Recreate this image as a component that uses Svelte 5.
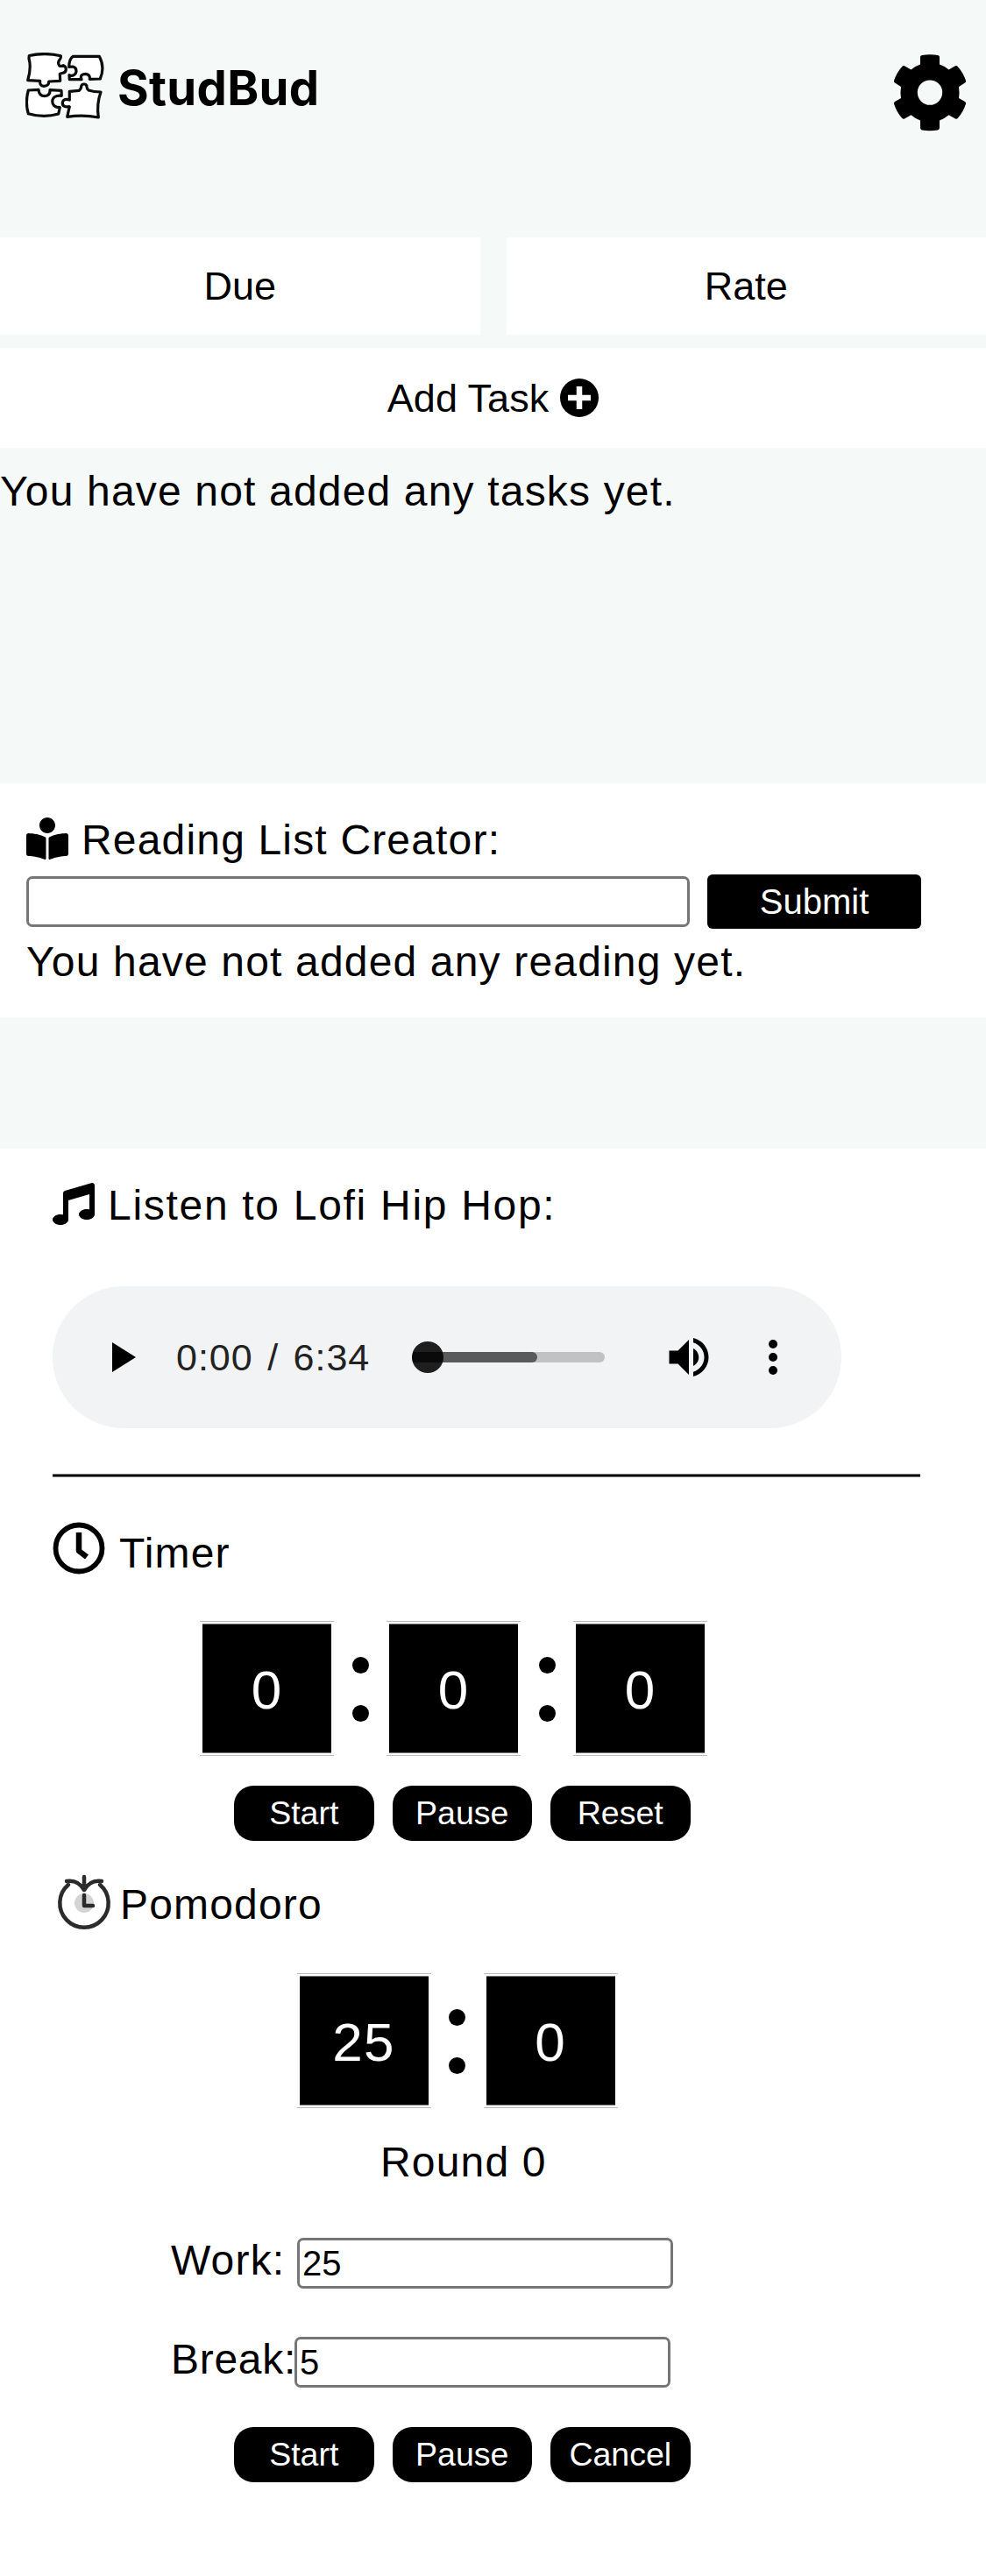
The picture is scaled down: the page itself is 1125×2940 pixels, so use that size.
<script>
  const timer = ['0', '0', '0'];
  const pomodoro = ['25', '0'];
  const timerActions = ['Start', 'Pause', 'Reset'];
  const pomodoroActions = ['Start', 'Pause', 'Cancel'];
  let reading = $state('');
  let work = $state('25');
  let rest = $state('5');
</script>

{#snippet clock(values)}
  <div class="clock">
    {#each values as value, i}
      {#if i > 0}
        <div class="colon"><i></i><i></i></div>
      {/if}
      <div class="cell"><span>{value}</span></div>
    {/each}
  </div>
{/snippet}

{#snippet actions(labels)}
  <div class="actions">
    {#each labels as label}
      <button class="pill">{label}</button>
    {/each}
  </div>
{/snippet}

<div class="page">
  <header>
    <div class="brand">
      <svg class="logo" width="92" height="78" viewBox="0 0 92 78" fill="#fff" stroke="#0c0c0c" stroke-width="3.2" stroke-linejoin="round">
        <path d="M4.300 3.500Q22.700 -.500 40.300 3.700Q41 6 38.500 9Q36.500 12 39 15.200Q40.300 16 43.300 14.700Q46.500 16 46.300 19.300Q46 23 42 23.500L39.300 24.300L39.700 32.300L26.700 33Q27 38 21 38.300Q16 38 16.700 32.300L2.700 31.700Q7 17 4 7Z"/>
        <path d="M54.300 4.300H84.300Q91 16.700 85.300 30L73.300 30.300Q74 25 68.700 24.300Q63.500 24.500 63.300 28L64 30.700H50.300L50 25.700Q53 27 55.300 25.700Q58 24 58 21Q58 17 54.300 16L49.700 16.300Q50 7 54.300 4.300Z"/>
        <path d="M3.300 43L15 42.300Q15.500 49.500 22 49.700Q28.500 49 28 42.700L41 43.300L41.300 49.300Q31 48.500 30.700 55.700Q31 62.500 39.300 62.700L37.700 70Q21 75 3.300 69.700Q-.500 57 3.300 43Z"/>
        <path d="M50.300 44.300L61.300 43.300Q64 41 63.700 38.300Q64.500 36 66.700 36Q70 36 70 39Q70 41.500 72 43Q78 45 86 45Q81 59 83.300 74Q66 70.500 47.700 73.300L50.300 61.700Q42 63 42.300 57Q43 52 50.300 54Z"/>
      </svg>
      <h1>StudBud</h1>
    </div>
    <svg class="gear" width="84" height="90" viewBox="0 0 84 90" fill="#000">
      <path fill-rule="evenodd" d="M31 4Q31 2.300 33 2Q42 .600 51 2Q53 2.300 53 4V12.500Q59 14.500 63.500 18.500L71 14.300Q72.500 13.500 73.700 15Q80 22 83 31Q83.500 32.800 82 33.600L75 38Q76 44.500 75 51L82 55Q83.500 56 83 57.500Q80 67 73.700 74Q72.500 75.300 71 74.500L63.500 70.300Q59 74.200 53 76.500V85Q53 87 51 87.400Q42 89 33 87.400Q31 87 31 85V76.500Q25 74.200 20.500 70.300L13 74.500Q11.500 75.300 10.300 74Q4 67 1 57.500Q.500 56 2 55L9 51Q8 44.500 9 38L2 33.600Q.500 32.800 1 31Q4 22 10.300 15Q11.500 13.500 13 14.300L20.500 18.500Q25 14.500 31 12.500ZM42 30.400A14.200 14.200 0 1 0 42 58.800A14.200 14.200 0 1 0 42 30.400Z"/>
    </svg>
  </header>

  <section class="tasks">
    <div class="sorts">
      <button class="wide">Due</button>
      <button class="wide">Rate</button>
    </div>
    <button class="wide add">Add Task
      <svg width="44" height="44" viewBox="0 0 44 44"><circle cx="22" cy="22" r="22"/><path d="M22 9V35M9 22H35" stroke="#fff" stroke-width="6.500"/></svg>
    </button>
    <p class="none">You have not added any tasks yet.</p>
  </section>

  <section class="reading">
    <h2>
      <svg width="48" height="48" viewBox="0 0 512 512"><path d="M352 96c0-53.020-42.980-96-96-96s-96 42.980-96 96 42.980 96 96 96 96-42.980 96-96zM233.590 241.100c-59.330-36.320-155.430-46.300-203.790-49.050C13.550 191.130 0 203.510 0 219.140v222.800c0 14.330 11.590 26.280 26.490 27.050 43.660 2.290 131.990 10.680 193.040 41.430 9.370 4.720 20.480-1.710 20.480-11.870V252.560c-.01-4.670-2.320-8.950-6.420-11.460zm248.610-49.050c-48.350 2.740-144.460 12.730-203.780 49.050-4.100 2.510-6.410 6.960-6.410 11.630v245.790c0 10.190 11.140 16.630 20.540 11.900 61.040-30.720 149.320-39.110 192.970-41.400 14.900-.780 26.490-12.730 26.490-27.060V219.140c-.01-15.630-13.560-28.010-29.810-27.090z"/></svg>
      <span>Reading List Creator:</span>
    </h2>
    <div class="entry">
      <input bind:value={reading} />
      <button>Submit</button>
    </div>
    <p>You have not added any reading yet.</p>
  </section>

  <main>
    <h2 class="listen">
      <svg width="48" height="48" viewBox="0 0 512 512"><path d="M470.380 1.510L150.410 96A32 32 0 0 0 128 126.510v261.410A139 139 0 0 0 96 384c-53 0-96 28.660-96 64s43 64 96 64 96-28.660 96-64V214.320l256-75v184.610a138.400 138.400 0 0 0-32-3.930c-53 0-96 28.660-96 64s43 64 96 64 96-28.650 96-64V32a32 32 0 0 0-41.620-30.490z"/></svg>
      <span>Listen to Lofi Hip Hop:</span>
    </h2>

    <div class="player">
      <svg class="play" width="27" height="34" viewBox="0 0 27 34"><path d="M0 0L27 17L0 34Z"/></svg>
      <span class="time">0:00 / 6:34</span>
      <div class="track"><div class="loaded"></div><div class="knob"></div></div>
      <svg class="volume" width="60" height="60" viewBox="0 0 24 24"><path d="M3 9v6h4l5 5V4L7 9H3zm13.500 3c0-1.770-1.020-3.290-2.500-4.030v8.050c1.480-.730 2.500-2.250 2.500-4.020zM14 3.230v2.060c2.890.860 5 3.540 5 6.710s-2.110 5.850-5 6.710v2.060c4.010-.910 7-4.490 7-8.770s-2.990-7.860-7-8.770z"/></svg>
      <svg class="more" width="10" height="40" viewBox="0 0 10 40"><circle cx="5" cy="5" r="5"/><circle cx="5" cy="20" r="5"/><circle cx="5" cy="35" r="5"/></svg>
    </div>

    <hr />

    <h2 class="timer">
      <svg width="60" height="60" viewBox="0 0 60 60" fill="none" stroke="#000"><circle cx="30" cy="30" r="26.500" stroke-width="5.800"/><path d="M30 12V33L39 40" stroke-width="6.500" stroke-linejoin="round"/></svg>
      <span>Timer</span>
    </h2>
    {@render clock(timer)}
    {@render actions(timerActions)}

    <h2 class="pomodoro">
      <svg width="62" height="64" viewBox="0 0 62 64" fill="none" stroke="#2b2b2b" stroke-width="4.500" stroke-linecap="round" stroke-linejoin="round"><circle cx="31" cy="33" r="11" fill="#d4d4d4" stroke="none"/><path d="M13 12A27.700 27.700 0 1 0 49 12M31 3V18M11 8Q24 6 31 18Q38 6 51 8M31 24V36H41"/></svg>
      <span>Pomodoro</span>
    </h2>
    <div class="shift">{@render clock(pomodoro)}</div>
    <p class="round">Round 0</p>
    <label class="field"><span>Work:</span><input bind:value={work} /></label>
    <label class="field rest"><span>Break:</span><input bind:value={rest} /></label>
    {@render actions(pomodoroActions)}
  </main>
</div>

<style>
  :global(body) { background: #f5f9f8; }
  .page {
    width: 1125px;
    height: 2940px;
    display: flex;
    flex-direction: column;
    overflow: hidden;
    background: #f5f9f8;
    color: #000;
    font: 48px/60px "Liberation Sans", Arial, sans-serif;
    letter-spacing: 1.17px;
  }
  * { box-sizing: border-box; }
  h1, h2, p { margin: 0; font-weight: 400; font-size: inherit; }
  svg { display: block; flex: none; }
  button {
    border: 0;
    padding: 0;
    margin: 0;
    font-family: inherit;
    letter-spacing: 0;
    color: inherit;
  }
  header {
    height: 271px;
    display: flex;
    justify-content: space-between;
    align-items: flex-start;
    padding: 60px 22px 0 29px;
  }
  .brand { display: flex; gap: 13px; }
  h1 {
    font: 700 54.500px/81px Inter, sans-serif;
    letter-spacing: 0.300px;
  }
  .gear { margin-top: 1px; }
  .tasks { height: 623px; }
  .sorts { display: grid; grid-template-columns: 1fr 1fr; gap: 30px; margin-bottom: 15px; }
  .wide { background: #fff; font-size: 45px; line-height: 51px; height: 111px; }
  .add {
    width: 100%;
    height: 114px;
    display: flex;
    align-items: center;
    justify-content: center;
    gap: 13px;
  }
  .none { margin-top: 20px; }
  .reading { background: #fff; height: 267px; padding: 35px 74px 0 30px; }
  h2 { display: flex; align-items: flex-start; }
  .reading h2 { height: 68px; }
  .reading h2 svg { margin: 4px 15px 0 0; }
  .entry { display: flex; align-items: center; gap: 20px; margin-top: 1px; }
  input {
    height: 58px;
    border: 3px solid #767676;
    border-radius: 7px;
    background: #fff;
    padding: 0 3px;
    font: 40px/46px "Liberation Sans", Arial, sans-serif;
    color: #000;
    outline: none;
  }
  .entry input { width: 757px; }
  .entry button { width: 244px; height: 62px; background: #000; color: #fff; border-radius: 6px; font-size: 40px; }
  .reading p { margin-top: 8px; }
  main { margin-top: 150px; flex: 1; background: #fff; padding: 39px 75px 0 60px; }
  .listen { height: 118px; letter-spacing: 1.7px; }
  .listen span { margin: -4px 0 0 15px; }
  .player {
    width: 900px;
    height: 162px;
    border-radius: 81px;
    background: #f1f3f4;
    display: flex;
    align-items: center;
    padding-left: 68px;
  }
  .time { width: 266px; margin-left: 46px; font-size: 43px; letter-spacing: 1px; word-spacing: 3.500px; color: #222; white-space: pre; }
  .track { position: relative; width: 220px; height: 12px; margin-left: 3px; border-radius: 6px; background: #c1c2c3; }
  .loaded { width: 143px; height: 12px; border-radius: 6px; background: #5a5a5a; }
  .knob { position: absolute; left: 0; top: -12px; width: 36px; height: 36px; border-radius: 50%; background: linear-gradient(#1f1f1f 12px, #0a0a0a 12px, #0a0a0a 24px, #1f1f1f 24px); }
  .volume { margin-left: 66px; }
  .more { margin-left: 61px; }
  hr { height: 4px; margin: 52px 0 51px; border: solid #777; border-width: 1px 0; background: #000; }
  .timer { height: 113px; }
  .timer span { margin: 6px 0 0 16px; }
  .clock { display: flex; justify-content: center; width: 915px; height: 154px; }
  .shift { padding-left: 4px; }
  .cell {
    width: 153px;
    height: 154px;
    padding: 2px 3px;
    border: solid #bbb;
    border-width: 1px 0;
    background: #fff;
  }
  .cell span {
    display: block;
    height: 148px;
    border: solid #777;
    border-width: 1px 0;
    background: #000;
    color: #fff;
    font-size: 62px;
    line-height: 149px;
    text-align: center;
  }
  .colon { width: 60px; display: flex; flex-direction: column; align-items: center; gap: 36px; padding-top: 41px; }
  .colon i { width: 19px; height: 19px; border-radius: 50%; background: #000; }
  .actions { display: flex; gap: 21px; margin: 34px 0 0 207px; }
  .pill { width: 159.500px; height: 63px; border-radius: 22px; background: #000; color: #fff; font-size: 37.500px; }
  .pomodoro { margin-top: 38px; height: 113px; }
  .pomodoro svg { margin-left: 5px; }
  .pomodoro span { margin: 5px 0 0 10px; }
  .round { margin: 32px 0 54px 374px; }
  .field { display: flex; height: 113px; margin-left: 135px; }
  .field span { width: 144px; margin-top: -2px; }
  .field input { width: 429px; margin-top: 2px; }
  .field.rest span { width: 141px; letter-spacing: 0.700px; }
  .field.rest { height: 105px; }
  .rest + .actions { margin-top: 0; }
</style>
